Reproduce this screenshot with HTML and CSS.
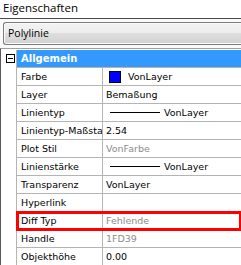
FILE: index.html
```html
<!DOCTYPE html>
<html lang="de">
<head>
    <meta charset="utf-8">
    <title>Eigenschaften</title>
    <link rel="stylesheet" href="styles.css">
</head>
<body>
    <header class="title">Eigenschaften</header>

    <div class="toolbar">
        <div class="select">Polylinie</div>
    </div>

    <section class="grid">
        <div class="gutter">
            <span class="toggle"></span>
        </div>
        <div class="rows">
            <div class="row head">Allgemein</div>
            <div class="row">
                <div class="name">Farbe</div>
                <div class="value"><span class="swatch"></span>VonLayer</div>
            </div>
            <div class="row">
                <div class="name">Layer</div>
                <div class="value">Bemaßung</div>
            </div>
            <div class="row">
                <div class="name">Linientyp</div>
                <div class="value"><span class="stroke"></span>VonLayer</div>
            </div>
            <div class="row">
                <div class="name">Linientyp-Maßstab</div>
                <div class="value">2.54</div>
            </div>
            <div class="row">
                <div class="name">Plot Stil</div>
                <div class="value muted">VonFarbe</div>
            </div>
            <div class="row">
                <div class="name">Linienstärke</div>
                <div class="value"><span class="stroke"></span>VonLayer</div>
            </div>
            <div class="row">
                <div class="name">Transparenz</div>
                <div class="value">VonLayer</div>
            </div>
            <div class="row">
                <div class="name">Hyperlink</div>
                <div class="value"></div>
            </div>
            <div class="row marked">
                <div class="name">Diff Typ</div>
                <div class="value muted">Fehlende</div>
            </div>
            <div class="row">
                <div class="name">Handle</div>
                <div class="value muted">1FD39</div>
            </div>
            <div class="row">
                <div class="name">Objekthöhe</div>
                <div class="value">0.00</div>
            </div>
        </div>
    </section>
</body>
</html>
```

FILE: styles.css
```css
html, body {
    margin: 0;
    height: 265px;
    overflow: hidden;
}

body {
    background-color: #fafafa;

    font-family: "DejaVu Sans", sans-serif;
    font-size: 9.5px;
    color: #000;
}

.title {
    height: 18px;
    padding-left: 3px;

    font-family: "Open Sans", sans-serif;
    font-size: 11.5px;
    line-height: 16px;

    background-color: #fff;
    border-bottom: 1px solid #4a4a4a;
}

.toolbar {
    height: 29px;
    padding: 3px 0 0 3px;
    box-sizing: border-box;
    overflow: hidden;
}

/* the arrow button sits past the right edge of the panel */
.select {
    margin-right: -8px;
    height: 23px;
    padding-left: 4px;
    box-sizing: border-box;

    font-family: "Open Sans", sans-serif;
    font-size: 10.5px;
    line-height: 21px;

    border: 1px solid #7c7c7c;
    border-right: none;
    border-radius: 3px 0 0 3px;
    box-shadow: inset 0 0 0 1px #fbfbfb;
    background: linear-gradient(#f3f3f3, #ececec 50%, #dedede 50%, #d2d2d2);
}

.grid {
    display: flex;
    border-top: 1px solid #a0a0a0;
    border-left: 1px solid #5a5a5a;
    background-color: #fff;
    padding-top: 1px;
}

.gutter {
    width: 15px;
    flex: none;
}

.toggle {
    display: block;
    position: relative;
    width: 7px;
    height: 7px;
    margin: 4px 0 0 5px;

    border: 1px solid #000;
    background-color: #fff;
}

.toggle::after {
    content: "";
    position: absolute;
    left: 1px;
    top: 3px;
    width: 5px;
    height: 1px;
    background-color: #000;
}

.rows {
    flex: 1;
    border-left: 1px solid #b4b4b4;
}

.row {
    display: flex;
    height: 17px;
    line-height: 17px;
    white-space: nowrap;

    border-bottom: 1px solid #b4b4b4;
}

.row.head {
    padding-left: 4px;

    font-size: 10px;
    font-weight: bold;
    color: #fff;

    background-color: #3399ff;
}

.name {
    width: 81px;
    flex: none;
    padding-left: 4px;
    overflow: hidden;

    border-right: 1px solid #b4b4b4;
}

.value {
    flex: 1;
    display: flex;
    align-items: center;
    padding-left: 3px;
}

.muted {
    color: #8c8c8c;
}

.swatch {
    width: 10px;
    height: 10px;
    margin: 0 7px 0 3px;

    border: 1px solid #000;
    background-color: #0000ff;
}

.stroke {
    width: 50px;
    height: 1px;
    margin: 0 4px 0 4px;

    background-color: #000;
}

.marked {
    outline: 3px solid #f00;
    outline-offset: -2px;
}
```
